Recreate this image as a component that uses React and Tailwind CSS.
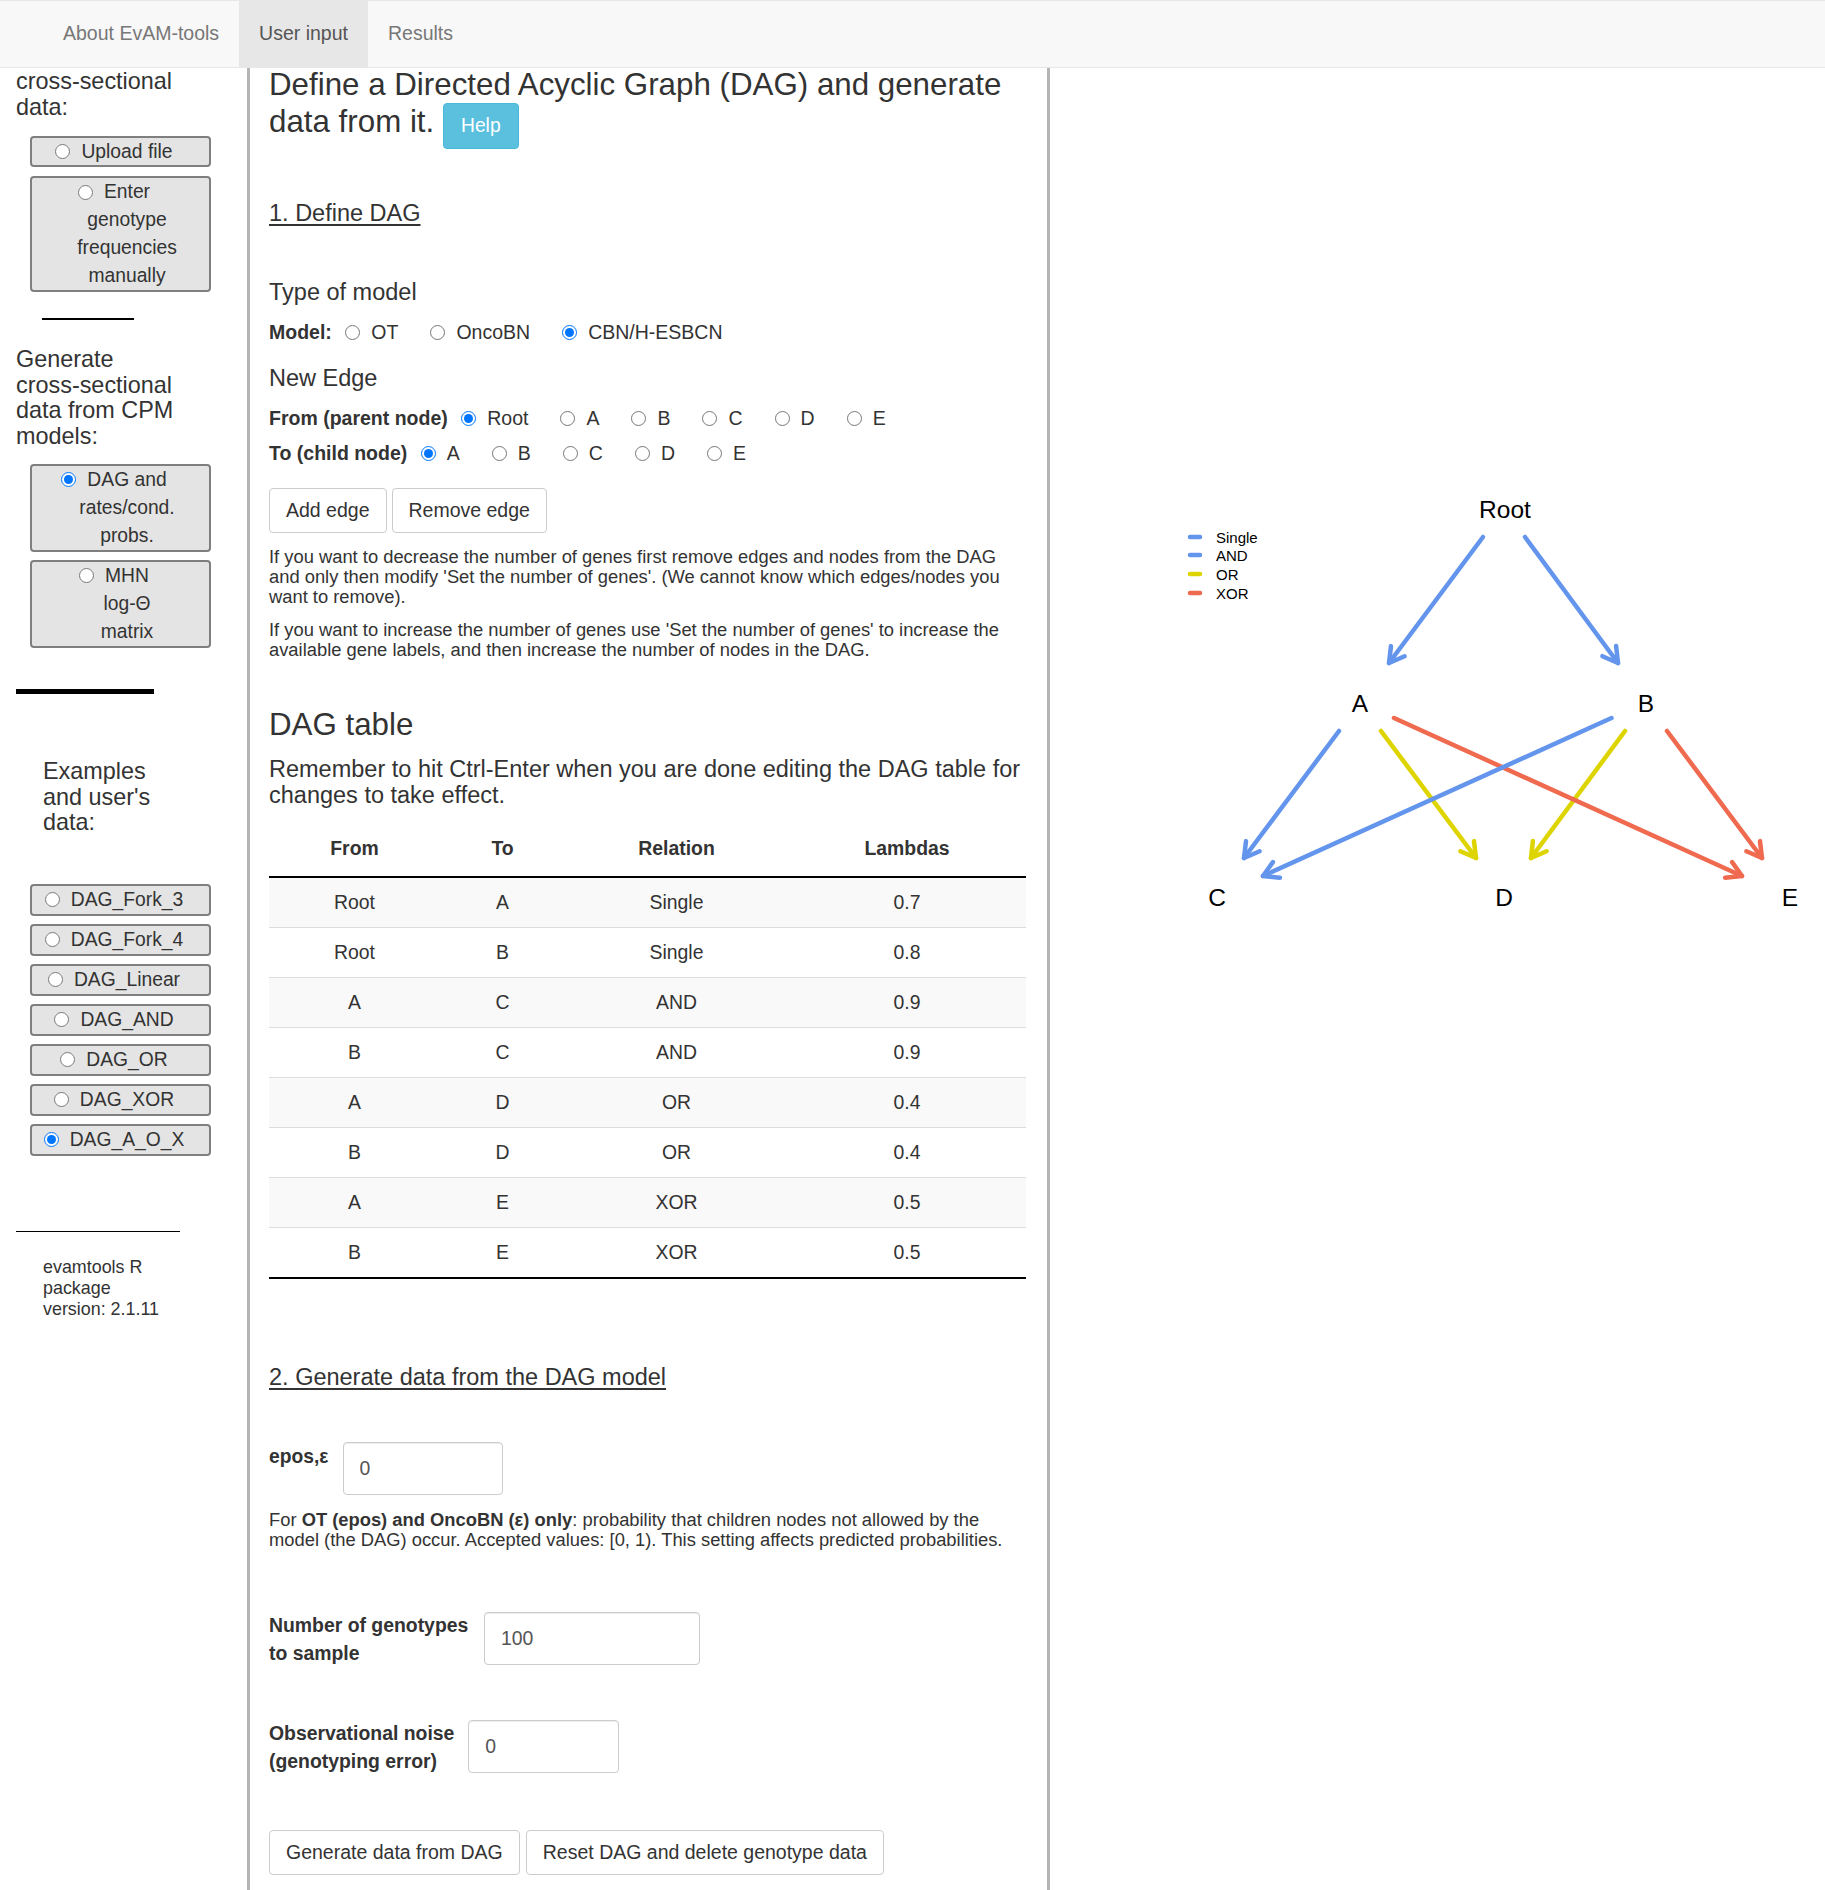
import React from "react";

const BLUE = "#6495ed";
const YELLOW = "#ddd400";
const RED = "#ef6a4f";

function Radio({ checked, className }) {
  return (
    <input
      type="radio"
      checked={!!checked}
      readOnly
      className={"m-0 h-[15px] w-[15px] shrink-0 " + (className || "")}
    />
  );
}

function SideBox({ lines, checked, tall }) {
  return (
    <div
      className={
        "ml-[30px] w-[181px] rounded-[4px] border-2 border-[#7f7f7f] bg-[#e4e4e4] pl-[13px] text-center text-[19.3px] text-[#333] " +
        (tall ? "leading-[28px]" : "leading-[27px]")
      }
    >
      <div className="flex items-center justify-center">
        <Radio checked={checked} className="-ml-[26px] mr-[11px]" />
        <span className="whitespace-nowrap">{lines[0]}</span>
      </div>
      {lines.slice(1).map((l) => (
        <div key={l}>{l}</div>
      ))}
    </div>
  );
}

function ExampleBox({ label, checked }) {
  return (
    <div className="ml-[30px] w-[181px] rounded-[4px] border-2 border-[#7f7f7f] bg-[#e4e4e4] pl-[13px] text-[19.3px] leading-[28px] text-[#333]">
      <div className="flex items-center justify-center">
        <Radio checked={checked} className="-ml-[26px] mr-[11px]" />
        <span className="whitespace-nowrap">{label}</span>
      </div>
    </div>
  );
}

function RadioRow({ label, options, selected }) {
  return (
    <div className="flex h-[24px] items-center text-[19.5px] leading-[24px]">
      <span className="mr-[13.5px] font-bold whitespace-nowrap">{label}</span>
      <div className="flex items-center gap-[32px]">
        {options.map((o) => (
          <div key={o} className="flex items-center gap-[11px]">
            <Radio checked={o === selected} />
            <span className="whitespace-nowrap">{o}</span>
          </div>
        ))}
      </div>
    </div>
  );
}

function Sidebar() {
  return (
    <aside className="w-[250px] shrink-0 border-r-[3px] border-[#b4b4b4] text-[#333]">
      <div className="mt-[1px] pl-[16px] text-[23.4px] leading-[25.5px]">
        cross-sectional
        <br />
        data:
      </div>
      <div className="mt-[16px]">
        <SideBox lines={["Upload file"]} />
      </div>
      <div className="mt-[9px]">
        <SideBox lines={["Enter", "genotype", "frequencies", "manually"]} tall />
      </div>
      <div className="ml-[42px] mt-[26px] h-[2px] w-[92px] bg-black" />
      <div className="mt-[27px] pl-[16px] text-[23.4px] leading-[25.7px]">
        Generate
        <br />
        cross-sectional
        <br />
        data from CPM
        <br />
        models:
      </div>
      <div className="mt-[14px]">
        <SideBox lines={["DAG and", "rates/cond.", "probs."]} checked tall />
      </div>
      <div className="mt-[8px]">
        <SideBox lines={["MHN", "log-\u0398", "matrix"]} tall />
      </div>
      <div className="ml-[16px] mt-[41px] h-[5px] w-[138px] bg-black" />
      <div className="ml-[43px] mt-[65px] text-[23.4px] leading-[25.7px]">
        Examples
        <br />
        and user's
        <br />
        data:
      </div>
      <div className="mt-[48px] flex flex-col gap-[8px]">
        {["DAG_Fork_3", "DAG_Fork_4", "DAG_Linear", "DAG_AND", "DAG_OR", "DAG_XOR", "DAG_A_O_X"].map((e) => (
          <ExampleBox key={e} label={e} checked={e === "DAG_A_O_X"} />
        ))}
      </div>
      <div className="ml-[16px] mt-[75px] h-[1px] w-[164px] bg-black" />
      <div className="ml-[43px] mt-[25px] text-[17.9px] leading-[21px]">
        evamtools R
        <br />
        package
        <br />
        version: 2.1.11
      </div>
    </aside>
  );
}

const rows = [
  ["Root", "A", "Single", "0.7"],
  ["Root", "B", "Single", "0.8"],
  ["A", "C", "AND", "0.9"],
  ["B", "C", "AND", "0.9"],
  ["A", "D", "OR", "0.4"],
  ["B", "D", "OR", "0.4"],
  ["A", "E", "XOR", "0.5"],
  ["B", "E", "XOR", "0.5"],
];

function DagTable() {
  return (
    <div className="mt-[15px] border-b-2 border-black text-[19.4px] text-[#333]">
      <div className="grid h-[55px] grid-cols-[171px_125px_223px_238px] items-center border-b-2 border-black pb-[1px] text-center font-bold">
        <div>From</div>
        <div>To</div>
        <div>Relation</div>
        <div>Lambdas</div>
      </div>
      {rows.map((r, i) => (
        <div
          key={i}
          className={
            "grid grid-cols-[171px_125px_223px_238px] items-center text-center " +
            (i === 0 ? "h-[49px] " : "h-[50px] border-t border-[#dddddd] ") +
            (i % 2 === 0 ? "bg-[#f9f9f9]" : "bg-white")
          }
        >
          {r.map((c, j) => (
            <div key={j}>{c}</div>
          ))}
        </div>
      ))}
    </div>
  );
}

function TextInput({ value, width }) {
  return (
    <input
      readOnly
      value={value}
      className={
        "h-[53px] rounded-[4px] border border-[#cccccc] bg-white px-[16px] text-[19.4px] text-[#555] shadow-[inset_0_1px_1px_rgba(0,0,0,0.075)] outline-none " +
        width
      }
    />
  );
}

function Btn({ children, h }) {
  return (
    <button
      className={
        "rounded-[4px] border border-[#cccccc] bg-white px-[16px] text-[19.5px] text-[#333] " + h
      }
    >
      {children}
    </button>
  );
}

function Main() {
  return (
    <main className="w-[800px] shrink-0 border-r-[3px] border-[#b4b4b4] pb-[8px] pl-[19px] pr-[21px] text-[#333]">
      <h2 className="-mt-[2px] text-[31.3px] font-normal leading-[37px]">
        Define a Directed Acyclic Graph (DAG) and generate data from it.{" "}
        <span className="inline-block h-[46px] rounded-[4px] border border-[#46b8da] bg-[#5bc0de] px-[17px] align-top text-[19.3px] leading-[44px] text-white">
          Help
        </span>
      </h2>
      <div className="mt-[50px] text-[23.5px] leading-[28px] underline decoration-[1.5px] underline-offset-[3px]">
        1. Define DAG
      </div>
      <div className="mt-[51px] text-[23.5px] leading-[28px]">Type of model</div>
      <div className="mt-[14px]">
        <RadioRow label="Model:" options={["OT", "OncoBN", "CBN/H-ESBCN"]} selected="CBN/H-ESBCN" />
      </div>
      <div className="mt-[20px] text-[23.5px] leading-[28px]">New Edge</div>
      <div className="mt-[14px]">
        <RadioRow label="From (parent node)" options={["Root", "A", "B", "C", "D", "E"]} selected="Root" />
      </div>
      <div className="mt-[11px]">
        <RadioRow label="To (child node)" options={["A", "B", "C", "D", "E"]} selected="A" />
      </div>
      <div className="mt-[23px] flex gap-[5px]">
        <Btn h="h-[45px]">Add edge</Btn>
        <Btn h="h-[45px]">Remove edge</Btn>
      </div>
      <p className="mt-[14px] text-[18.35px] leading-[20px]">
        If you want to decrease the number of genes first remove edges and nodes from the DAG
        <br />
        and only then modify 'Set the number of genes'. (We cannot know which edges/nodes you
        <br />
        want to remove).
      </p>
      <p className="mt-[13px] text-[18.35px] leading-[20px]">
        If you want to increase the number of genes use 'Set the number of genes' to increase the
        <br />
        available gene labels, and then increase the number of nodes in the DAG.
      </p>
      <h3 className="mt-[46px] text-[31.3px] font-normal leading-[37px]">DAG table</h3>
      <p className="mt-[13px] text-[23.5px] leading-[26px]">
        Remember to hit Ctrl-Enter when you are done editing the DAG table for
        <br />
        changes to take effect.
      </p>
      <DagTable />
      <div className="mt-[84px] text-[23.5px] leading-[28px] underline decoration-[1.5px] underline-offset-[3px]">
        2. Generate data from the DAG model
      </div>
      <div className="mt-[51px] flex items-start gap-[14px]">
        <span className="mt-[1px] text-[19.3px] font-bold leading-[28px]">epos,&#949;</span>
        <TextInput value="0" width="w-[160px]" />
      </div>
      <p className="mt-[15px] text-[18.35px] leading-[20px]">
        For <b>OT (epos) and OncoBN (&#949;) only</b>: probability that children nodes not allowed by the
        <br />
        model (the DAG) occur. Accepted values: [0, 1). This setting affects predicted probabilities.
      </p>
      <div className="mt-[61px] flex items-start gap-[15.7px]">
        <span className="text-[19.4px] font-bold leading-[28px]">
          Number of genotypes
          <br />
          to sample
        </span>
        <div className="mt-[1px]">
          <TextInput value="100" width="w-[216px]" />
        </div>
      </div>
      <div className="mt-[52px] flex items-start gap-[14px]">
        <span className="text-[19.4px] font-bold leading-[28px]">
          Observational noise
          <br />
          (genotyping error)
        </span>
        <div className="mt-[1px]">
          <TextInput value="0" width="w-[151px]" />
        </div>
      </div>
      <div className="mt-[55px] flex gap-[6px]">
        <Btn h="h-[45px]">Generate data from DAG</Btn>
        <Btn h="h-[45px]">Reset DAG and delete genotype data</Btn>
      </div>
    </main>
  );
}

const edges = [
  [1483, 537, 1389, 663, BLUE],
  [1525, 537, 1618, 663, BLUE],
  [1339, 731, 1244, 858, BLUE],
  [1381, 731, 1476, 858, YELLOW],
  [1625, 731, 1531, 858, YELLOW],
  [1394, 718, 1742, 876, RED],
  [1611.5, 718, 1263, 876, BLUE],
  [1667, 731, 1762, 858, RED],
];

function Arrow({ e }) {
  const [x1, y1, x2, y2, c] = e;
  const dx = x1 - x2;
  const dy = y1 - y2;
  const L = Math.hypot(dx, dy);
  const ux = dx / L;
  const uy = dy / L;
  const a = Math.PI / 6;
  const len = 17;
  const rot = (t) => [ux * Math.cos(t) - uy * Math.sin(t), ux * Math.sin(t) + uy * Math.cos(t)];
  const [ax, ay] = rot(a);
  const [bx, by] = rot(-a);
  return (
    <g stroke={c} strokeWidth="4.5" strokeLinecap="round" strokeLinejoin="round" fill="none">
      <line x1={x1} y1={y1} x2={x2} y2={y2} />
      <polyline points={`${x2 + ax * len},${y2 + ay * len} ${x2},${y2} ${x2 + bx * len},${y2 + by * len}`} />
    </g>
  );
}

function Graph() {
  const nodes = [
    ["Root", 1505, 509],
    ["A", 1360, 703],
    ["B", 1646, 703],
    ["C", 1217, 897],
    ["D", 1504, 897],
    ["E", 1790, 897],
  ];
  const legend = [
    ["Single", BLUE, 537],
    ["AND", BLUE, 555],
    ["OR", YELLOW, 574],
    ["XOR", RED, 593],
  ];
  return (
    <svg width="775" height="900" viewBox="1050 68 775 900" className="block">
      {legend.map(([t, c, y]) => (
        <g key={t}>
          <line x1="1190" y1={y} x2="1200" y2={y} stroke={c} strokeWidth="4.5" strokeLinecap="round" />
          <text x="1216" y={y} dominantBaseline="central" fontSize="15" fontFamily="Liberation Sans, Arial, sans-serif" fill="#000">
            {t}
          </text>
        </g>
      ))}
      {edges.map((e, i) => (
        <Arrow key={i} e={e} />
      ))}
      {nodes.map(([t, x, y]) => (
        <text key={t} x={x} y={y} textAnchor="middle" dominantBaseline="central" fontSize="24.5" fontFamily="Liberation Sans, Arial, sans-serif" fill="#000">
          {t}
        </text>
      ))}
    </svg>
  );
}

export default function App() {
  return (
    <div className="min-h-[1890px] w-[1825px] bg-white font-['Liberation_Sans',Arial,sans-serif] text-[#333]">
      <nav className="flex h-[68px] border-y border-[#e7e7e7] bg-[#f8f8f8] pl-[43px] text-[19.5px]">
        <div className="flex items-center px-[20px] text-[#777]">About EvAM-tools</div>
        <div className="flex items-center bg-[#e7e7e7] px-[20px] text-[#555]">User input</div>
        <div className="flex items-center px-[20px] text-[#777]">Results</div>
      </nav>
      <div className="flex min-h-[1822px]">
        <Sidebar />
        <Main />
        <div className="flex-1">
          <Graph />
        </div>
      </div>
    </div>
  );
}
